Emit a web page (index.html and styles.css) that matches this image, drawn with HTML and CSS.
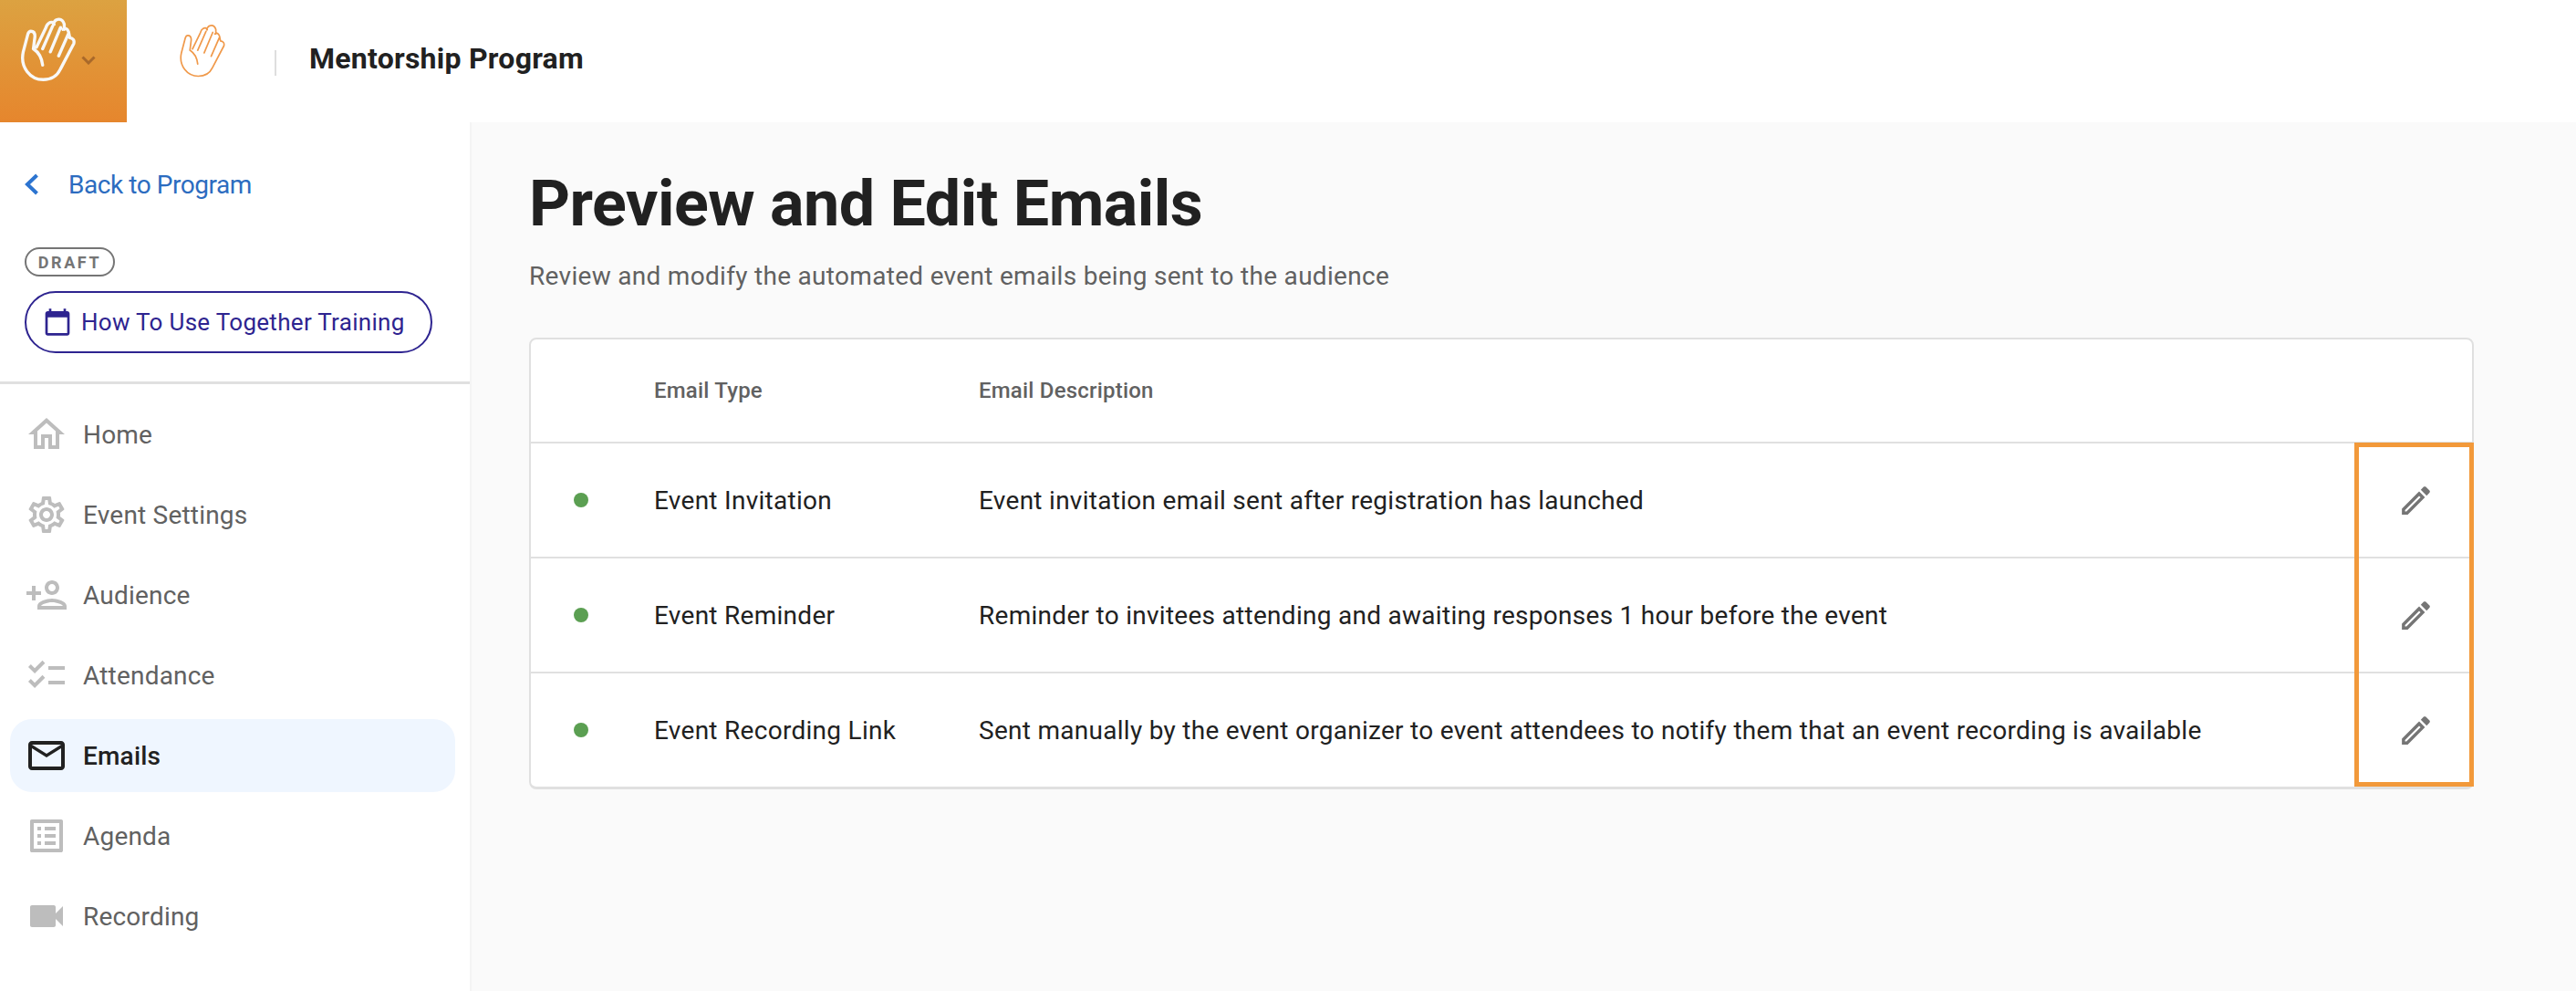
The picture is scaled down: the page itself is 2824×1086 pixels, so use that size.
FILE: index.html
```html
<!DOCTYPE html>
<html lang="en">
<head>
    <meta charset="UTF-8">
    <title>Preview and Edit Emails</title>
    <link rel="stylesheet" href="styles.css">
</head>
<body>
<svg class="defs" width="0" height="0">
    <symbol id="hand" viewBox="65 50 183 213">
        <path d="M108 155 L113 115 Q113 98 100 98 Q93 98 90 108 L75 165 C64 215 98 255 140 255 C165 255 184 245 195 222 L239 138 Q243 122 226 119 M226 119 L222 100 Q216 84 204 92 M208 92 L208 75 Q202 56 186 60 Q176 62 173 76 M175 76 Q170 64 158 72 Q152 75 148 88 L118 150 M170 82 L138 155 M196 86 L163 165 M222 105 L190 178 M108 155 Q134 172 138 208"/>
    </symbol>
    <symbol id="pencil" viewBox="0 0 24 24">
        <path d="M14.06 9.02l.92.92L5.92 19H5v-.92l9.06-9.06M17.66 3c-.25 0-.51.1-.7.29l-1.83 1.83 3.75 3.75 1.83-1.83c.39-.39.39-1.02 0-1.41l-2.34-2.34c-.2-.2-.45-.29-.71-.29zm-3.6 3.19L3 17.25V21h3.75L17.81 9.94l-3.75-3.75z"/>
    </symbol>
</svg>

<header class="topbar">
    <div class="tile">
        <svg class="hand hand-white"><use href="#hand"/></svg>
        <svg class="tile-caret" viewBox="0 0 16 10"><path d="M1.5 1.5 8 8l6.5-6.5"/></svg>
    </div>
    <svg class="hand hand-orange"><use href="#hand"/></svg>
    <span class="topbar-sep"></span>
    <span class="topbar-title">Mentorship Program</span>
</header>

<div class="layout">
    <aside class="sidebar">
        <div class="side-top">
            <a class="back-link">
                <svg class="back-icon" viewBox="0 0 16 24"><path d="M13.5 2 3 12l10.5 10"/></svg>
                Back to Program
            </a>
            <span class="draft">DRAFT</span>
            <a class="event-pill">
                <svg viewBox="0 0 24 24"><path d="M20 3h-1V1h-2v2H7V1H5v2H4c-1.1 0-2 .9-2 2v16c0 1.1.9 2 2 2h16c1.1 0 2-.9 2-2V5c0-1.1-.9-2-2-2zm0 18H4V8h16v13z"/></svg>
                How To Use Together Training
            </a>
        </div>
        <nav class="nav">
            <a class="nav-item">
                <svg viewBox="0 0 24 24"><path d="M12 5.69l5 4.5V18h-2v-6H9v6H7v-7.81l5-4.5M12 3L2 12h3v8h6v-6h2v6h6v-8h3L12 3z"/></svg>
                Home
            </a>
            <a class="nav-item">
                <svg viewBox="0 0 24 24"><path d="M19.43 12.98c.04-.32.07-.64.07-.98 0-.34-.03-.66-.07-.98l2.11-1.65c.19-.15.24-.42.12-.64l-2-3.46c-.09-.16-.26-.25-.44-.25-.06 0-.12.01-.17.03l-2.49 1c-.52-.4-1.08-.73-1.69-.98l-.38-2.65C14.46 2.18 14.25 2 14 2h-4c-.25 0-.46.18-.49.42l-.38 2.65c-.61.25-1.17.59-1.69.98l-2.49-1c-.06-.02-.12-.03-.18-.03-.17 0-.34.09-.43.25l-2 3.46c-.13.22-.07.49.12.64l2.11 1.65c-.04.32-.07.65-.07.98 0 .33.03.66.07.98l-2.11 1.65c-.19.15-.24.42-.12.64l2 3.46c.09.16.26.25.44.25.06 0 .12-.01.17-.03l2.49-1c.52.4 1.08.73 1.69.98l.38 2.65c.03.24.24.42.49.42h4c.25 0 .46-.18.49-.42l.38-2.65c.61-.25 1.17-.59 1.69-.98l2.49 1c.06.02.12.03.18.03.17 0 .34-.09.43-.25l2-3.46c.12-.22.07-.49-.12-.64l-2.11-1.65zm-1.98-1.71c.04.31.05.52.05.73 0 .21-.02.43-.05.73l-.14 1.13.89.7 1.08.84-.7 1.21-1.27-.51-1.04-.42-.9.68c-.43.32-.84.56-1.25.73l-1.06.43-.16 1.13-.2 1.35h-1.4l-.19-1.35-.16-1.13-1.06-.43c-.43-.18-.83-.41-1.23-.71l-.91-.7-1.06.43-1.27.51-.7-1.21 1.08-.84.89-.7-.14-1.13c-.03-.31-.05-.54-.05-.74s.02-.43.05-.73l.14-1.13-.89-.7-1.08-.84.7-1.21 1.27.51 1.04.42.9-.68c.43-.32.84-.56 1.25-.73l1.06-.43.16-1.13.2-1.35h1.39l.19 1.35.16 1.13 1.06.43c.43.18.83.41 1.23.71l.91.7 1.06-.43 1.27-.51.7 1.21-1.07.85-.89.7.14 1.13zM12 8c-2.21 0-4 1.79-4 4s1.79 4 4 4 4-1.79 4-4-1.79-4-4-4zm0 6c-1.1 0-2-.9-2-2s.9-2 2-2 2 .9 2 2-.9 2-2 2z"/></svg>
                Event Settings
            </a>
            <a class="nav-item">
                <svg viewBox="0 0 24 24"><path d="M15 12c2.21 0 4-1.79 4-4s-1.79-4-4-4-4 1.79-4 4 1.79 4 4 4zm0-6c1.1 0 2 .9 2 2s-.9 2-2 2-2-.9-2-2 .9-2 2-2zm0 8c-2.67 0-8 1.34-8 4v2h16v-2c0-2.66-5.33-4-8-4zm-6 4c.22-.72 3.31-2 6-2 2.7 0 5.8 1.29 6 2H9zm-3-3v-3h3v-2H6V7H4v3H1v2h3v3h2z"/></svg>
                Audience
            </a>
            <a class="nav-item">
                <svg viewBox="0 0 24 24"><path d="M22 7h-9v2h9V7zm0 8h-9v2h9v-2zM5.54 11L2 7.46l1.41-1.41 2.12 2.12 4.24-4.24 1.41 1.41L5.54 11zm0 8L2 15.46l1.41-1.41 2.12 2.12 4.24-4.24 1.41 1.41L5.54 19z"/></svg>
                Attendance
            </a>
            <a class="nav-item active">
                <svg viewBox="0 0 24 24"><path d="M22 6c0-1.1-.9-2-2-2H4c-1.1 0-2 .9-2 2v12c0 1.1.9 2 2 2h16c1.1 0 2-.9 2-2V6zm-2 0l-8 5-8-5h16zm0 12H4V8l8 5 8-5v10z"/></svg>
                Emails
            </a>
            <a class="nav-item">
                <svg viewBox="0 0 24 24"><path d="M19 5v14H5V5h14m1.1-2H3.9c-.5 0-.9.4-.9.9v16.2c0 .4.4.9.9.9h16.2c.4 0 .9-.5.9-.9V3.9c0-.5-.5-.9-.9-.9zM11 7h6v2h-6V7zm0 4h6v2h-6v-2zm0 4h6v2h-6zM7 7h2v2H7zm0 4h2v2H7zm0 4h2v2H7z"/></svg>
                Agenda
            </a>
            <a class="nav-item">
                <svg viewBox="0 0 24 24"><path d="M17 10.5V7c0-.55-.45-1-1-1H4c-.55 0-1 .45-1 1v10c0 .55.45 1 1 1h12c.55 0 1-.45 1-1v-3.5l4 4v-11l-4 4z"/></svg>
                Recording
            </a>
        </nav>
    </aside>

    <main class="content">
        <h1>Preview and Edit Emails</h1>
        <p class="subtitle">Review and modify the automated event emails being sent to the audience</p>

        <div class="card">
            <div class="row head">
                <span></span>
                <span>Email Type</span>
                <span>Email Description</span>
                <span></span>
            </div>
            <div class="row">
                <span class="dot"></span>
                <span>Event Invitation</span>
                <span>Event invitation email sent after registration has launched</span>
                <svg class="edit"><use href="#pencil"/></svg>
            </div>
            <div class="row">
                <span class="dot"></span>
                <span>Event Reminder</span>
                <span>Reminder to invitees attending and awaiting responses 1 hour before the event</span>
                <svg class="edit"><use href="#pencil"/></svg>
            </div>
            <div class="row">
                <span class="dot"></span>
                <span>Event Recording Link</span>
                <span>Sent manually by the event organizer to event attendees to notify them that an event recording is available</span>
                <svg class="edit"><use href="#pencil"/></svg>
            </div>
            <div class="highlight"></div>
        </div>
    </main>
</div>
</body>
</html>
```

FILE: styles.css
```css
* {
    box-sizing: border-box;
}

body {
    margin: 0;
    height: 1086px;
    overflow: hidden;
    display: flex;
    flex-direction: column;
    font-family: Roboto, "Liberation Sans", sans-serif;
    background: #fff;
    color: #212121;
}

.defs {
    position: absolute;
}

/* top bar */
.topbar {
    height: 134px;
    display: flex;
    align-items: center;
    background: #fff;
}

.tile {
    width: 139px;
    height: 134px;
    padding: 18px 0 0 22px;
    display: flex;
    align-items: flex-start;
    background: linear-gradient(180deg, #dca241 0%, #e6862d 100%);
}

.hand {
    fill: none;
    stroke-linecap: round;
    stroke-linejoin: round;
}

.hand-white {
    width: 62px;
    height: 72px;
    stroke: #f8f8f8;
    stroke-width: 10px;
}

.hand-orange {
    width: 52px;
    height: 61px;
    margin: -23px 0 0 57px;
    stroke: #f0994a;
    stroke-width: 6px;
}

.tile-caret {
    width: 16px;
    height: 10px;
    margin: 43px 0 0 5px;
    fill: none;
    stroke: #a9692a;
    stroke-width: 3px;
}

.topbar-sep {
    width: 2px;
    height: 28px;
    margin: 3px 36px 0 53px;
    background: #dedede;
}

.topbar-title {
    margin-bottom: 7px;
    font-size: 32px;
    font-weight: 700;
    letter-spacing: 0.25px;
}

/* sidebar */
.layout {
    flex: 1;
    display: flex;
    min-height: 0;
}

.sidebar {
    width: 517px;
    flex-shrink: 0;
    border-right: 2px solid #f4f4f4;
    background: #fff;
}

.side-top {
    height: 287px;
    padding: 52px 0 0 27px;
    display: flex;
    flex-direction: column;
    align-items: flex-start;
    border-bottom: 3px solid #e0e0e0;
}

.back-link {
    display: flex;
    align-items: center;
    height: 32px;
    font-size: 28px;
    letter-spacing: -0.45px;
    color: #2c6cc0;
}

.back-icon {
    width: 16px;
    height: 24px;
    margin-right: 32px;
    fill: none;
    stroke: #2c74d0;
    stroke-width: 4px;
}

.draft {
    margin-top: 53px;
    width: 99px;
    height: 32px;
    display: flex;
    align-items: center;
    justify-content: center;
    border: 2px solid #757575;
    border-radius: 16px;
    font-size: 18px;
    font-weight: 700;
    letter-spacing: 2.6px;
    color: #757575;
}

.event-pill {
    margin-top: 16px;
    width: 447px;
    height: 68px;
    padding-left: 18px;
    display: flex;
    align-items: center;
    gap: 10px;
    border: 2px solid #2e2490;
    border-radius: 34px;
    font-size: 26px;
    letter-spacing: 0.3px;
    color: #2e2490;
}

.event-pill svg {
    width: 32px;
    height: 32px;
    fill: #2e2490;
}

.nav {
    padding: 15px 16px 0 11px;
    display: flex;
    flex-direction: column;
    gap: 8px;
}

.nav-item {
    height: 80px;
    padding-left: 16px;
    display: flex;
    align-items: center;
    gap: 16px;
    border-radius: 24px;
    font-size: 28px;
    letter-spacing: 0.2px;
    color: #616161;
}

.nav-item svg {
    width: 48px;
    height: 48px;
    fill: #bdbdbd;
}

.nav-item.active {
    background: #eff6ff;
    font-weight: 500;
    color: #212121;
}

.nav-item.active svg {
    fill: #212121;
}

/* main */
.content {
    flex: 1;
    padding: 43px 112px 0 63px;
    background: #fafafa;
}

h1 {
    margin: 0;
    font-size: 70px;
    font-weight: 700;
    line-height: 92px;
    letter-spacing: -0.5px;
    color: #212121;
}

.subtitle {
    margin: 16px 0 0;
    font-size: 28px;
    line-height: 36px;
    letter-spacing: 0.3px;
    color: #616161;
}

.card {
    position: relative;
    margin-top: 49px;
    border: 2px solid #e0e0e0;
    border-bottom-width: 3px;
    border-radius: 8px;
    background: #fff;
}

.row {
    height: 126px;
    display: grid;
    grid-template-columns: 135px 356px 1fr 130px;
    align-items: center;
    border-bottom: 2px solid #e0e0e0;
    font-size: 28px;
    letter-spacing: 0.28px;
}

.row:nth-last-child(2) {
    height: 124px;
    border-bottom: 0;
}

.row.head {
    height: 114px;
    font-size: 24px;
    font-weight: 500;
    letter-spacing: 0.2px;
    color: #616161;
}

.dot {
    width: 16px;
    height: 16px;
    margin-left: 47px;
    border-radius: 50%;
    background: #5b9f52;
}

.edit {
    width: 41px;
    height: 41px;
    margin-left: 6px;
    justify-self: center;
    fill: #757575;
}

.highlight {
    position: absolute;
    top: 113px;
    right: -2px;
    bottom: 0;
    width: 131px;
    border: 5px solid #f2993a;
    pointer-events: none;
}
```
